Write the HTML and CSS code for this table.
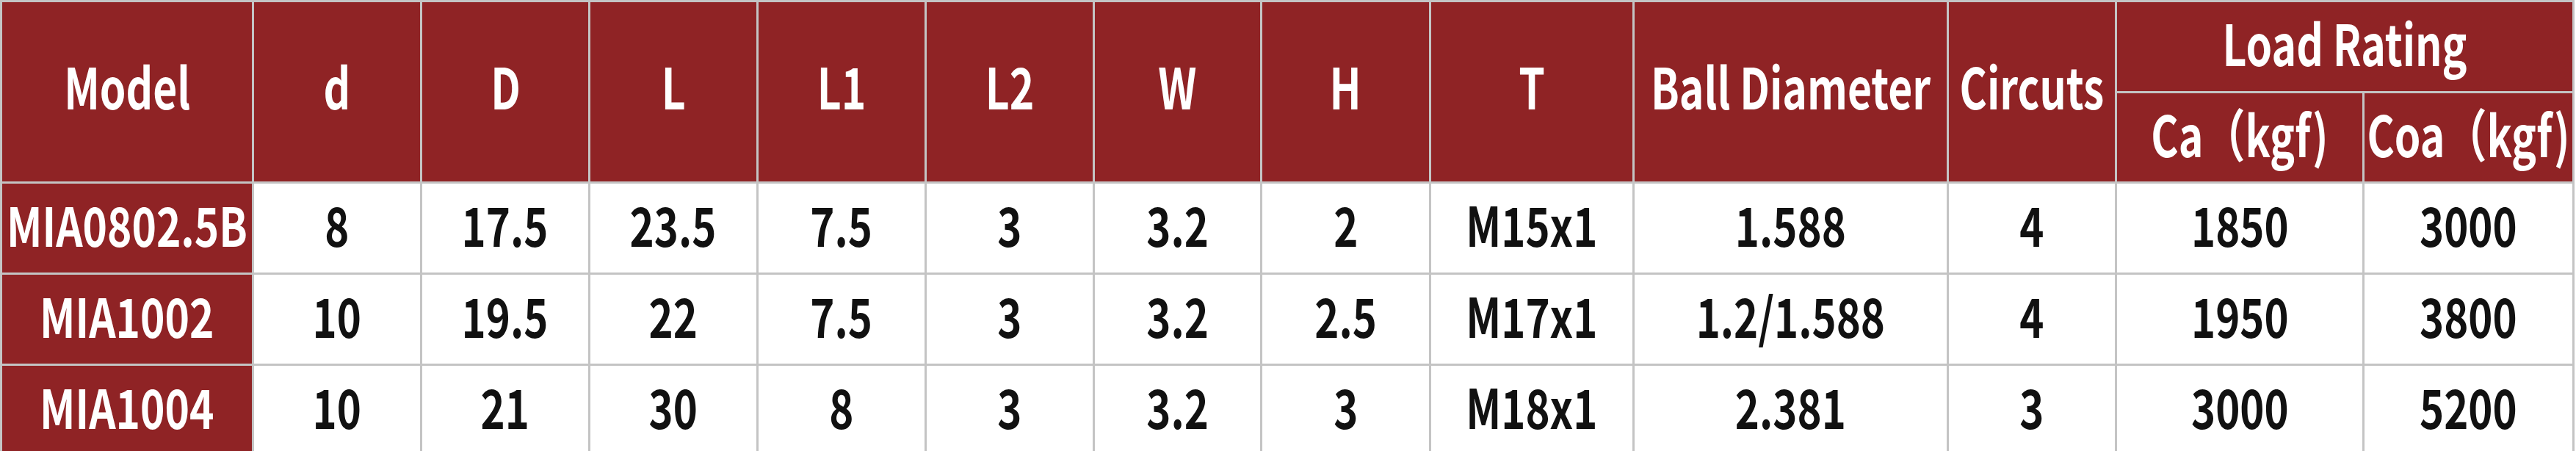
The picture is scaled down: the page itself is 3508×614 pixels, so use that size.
FILE: index.html
```html
<!DOCTYPE html>
<html lang="en">
<head>
<meta charset="utf-8">
<title>MIA Ball Nut Specifications</title>
<link rel="stylesheet" href="styles.css">
</head>
<body>
<div class="spec">
  <div class="hd tall"><span>Model</span></div>
  <div class="hd tall"><span>d</span></div>
  <div class="hd tall"><span>D</span></div>
  <div class="hd tall"><span>L</span></div>
  <div class="hd tall"><span>L1</span></div>
  <div class="hd tall"><span>L2</span></div>
  <div class="hd tall"><span>W</span></div>
  <div class="hd tall"><span>H</span></div>
  <div class="hd tall"><span>T</span></div>
  <div class="hd tall"><span>Ball Diameter</span></div>
  <div class="hd tall"><span>Circuts</span></div>
  <div class="hd wide"><span>Load Rating</span></div>
  <div class="hd sub"><span>Ca（kgf)</span></div>
  <div class="hd sub"><span>Coa（kgf)</span></div>

  <div class="model"><span>MIA0802.5B</span></div>
  <div class="cell"><span>8</span></div>
  <div class="cell"><span>17.5</span></div>
  <div class="cell"><span>23.5</span></div>
  <div class="cell"><span>7.5</span></div>
  <div class="cell"><span>3</span></div>
  <div class="cell"><span>3.2</span></div>
  <div class="cell"><span>2</span></div>
  <div class="cell"><span>M15x1</span></div>
  <div class="cell"><span>1.588</span></div>
  <div class="cell"><span>4</span></div>
  <div class="cell"><span>1850</span></div>
  <div class="cell"><span>3000</span></div>

  <div class="model"><span>MIA1002</span></div>
  <div class="cell"><span>10</span></div>
  <div class="cell"><span>19.5</span></div>
  <div class="cell"><span>22</span></div>
  <div class="cell"><span>7.5</span></div>
  <div class="cell"><span>3</span></div>
  <div class="cell"><span>3.2</span></div>
  <div class="cell"><span>2.5</span></div>
  <div class="cell"><span>M17x1</span></div>
  <div class="cell"><span>1.2/1.588</span></div>
  <div class="cell"><span>4</span></div>
  <div class="cell"><span>1950</span></div>
  <div class="cell"><span>3800</span></div>

  <div class="model"><span>MIA1004</span></div>
  <div class="cell"><span>10</span></div>
  <div class="cell"><span>21</span></div>
  <div class="cell"><span>30</span></div>
  <div class="cell"><span>8</span></div>
  <div class="cell"><span>3</span></div>
  <div class="cell"><span>3.2</span></div>
  <div class="cell"><span>3</span></div>
  <div class="cell"><span>M18x1</span></div>
  <div class="cell"><span>2.381</span></div>
  <div class="cell"><span>3</span></div>
  <div class="cell"><span>3000</span></div>
  <div class="cell"><span>5200</span></div>
</div>
</body>
</html>
```
FILE: styles.css
```css
html, body {
  margin: 0;
  padding: 0;
  background: #ffffff;
}
body {
  overflow: hidden;
  font-family: "Noto Sans CJK SC", "Noto Sans", sans-serif;
}
.spec {
  display: grid;
  width: max-content;
  grid-template-columns: 340px 226px 226px 226px 226px 226px 225px 227px 274px 425px 226px 334px 283px;
  grid-template-rows: 121px 120px 121px 121px 121px;
  gap: 3px;
  padding: 3px;
  background: #c4c4c4;
}
.spec > div {
  display: flex;
  align-items: center;
  justify-content: center;
  box-sizing: border-box;
  line-height: 1;
  white-space: nowrap;
}
.spec span {
  display: inline-block;
  transform-origin: center center;
}
.hd {
  background: #8f2325;
  color: #ffffff;
  font-weight: 700;
  font-size: 77px;
}
.hd span {
  transform: scaleX(0.74);
}
.tall {
  grid-row: span 2;
  padding-bottom: 19px;
}
.wide {
  grid-column: span 2;
  padding-bottom: 14px;
}
.sub {
  padding-bottom: 14px;
}
.model {
  background: #8f2325;
  color: #ffffff;
  font-weight: 700;
  font-size: 73px;
  padding-bottom: 13px;
}
.model span {
  transform: scaleX(0.777);
}
.cell {
  background: #ffffff;
  color: #111111;
  font-weight: 700;
  font-size: 74px;
  padding-bottom: 13px;
}
.cell span {
  transform: scaleX(0.76);
}
```
